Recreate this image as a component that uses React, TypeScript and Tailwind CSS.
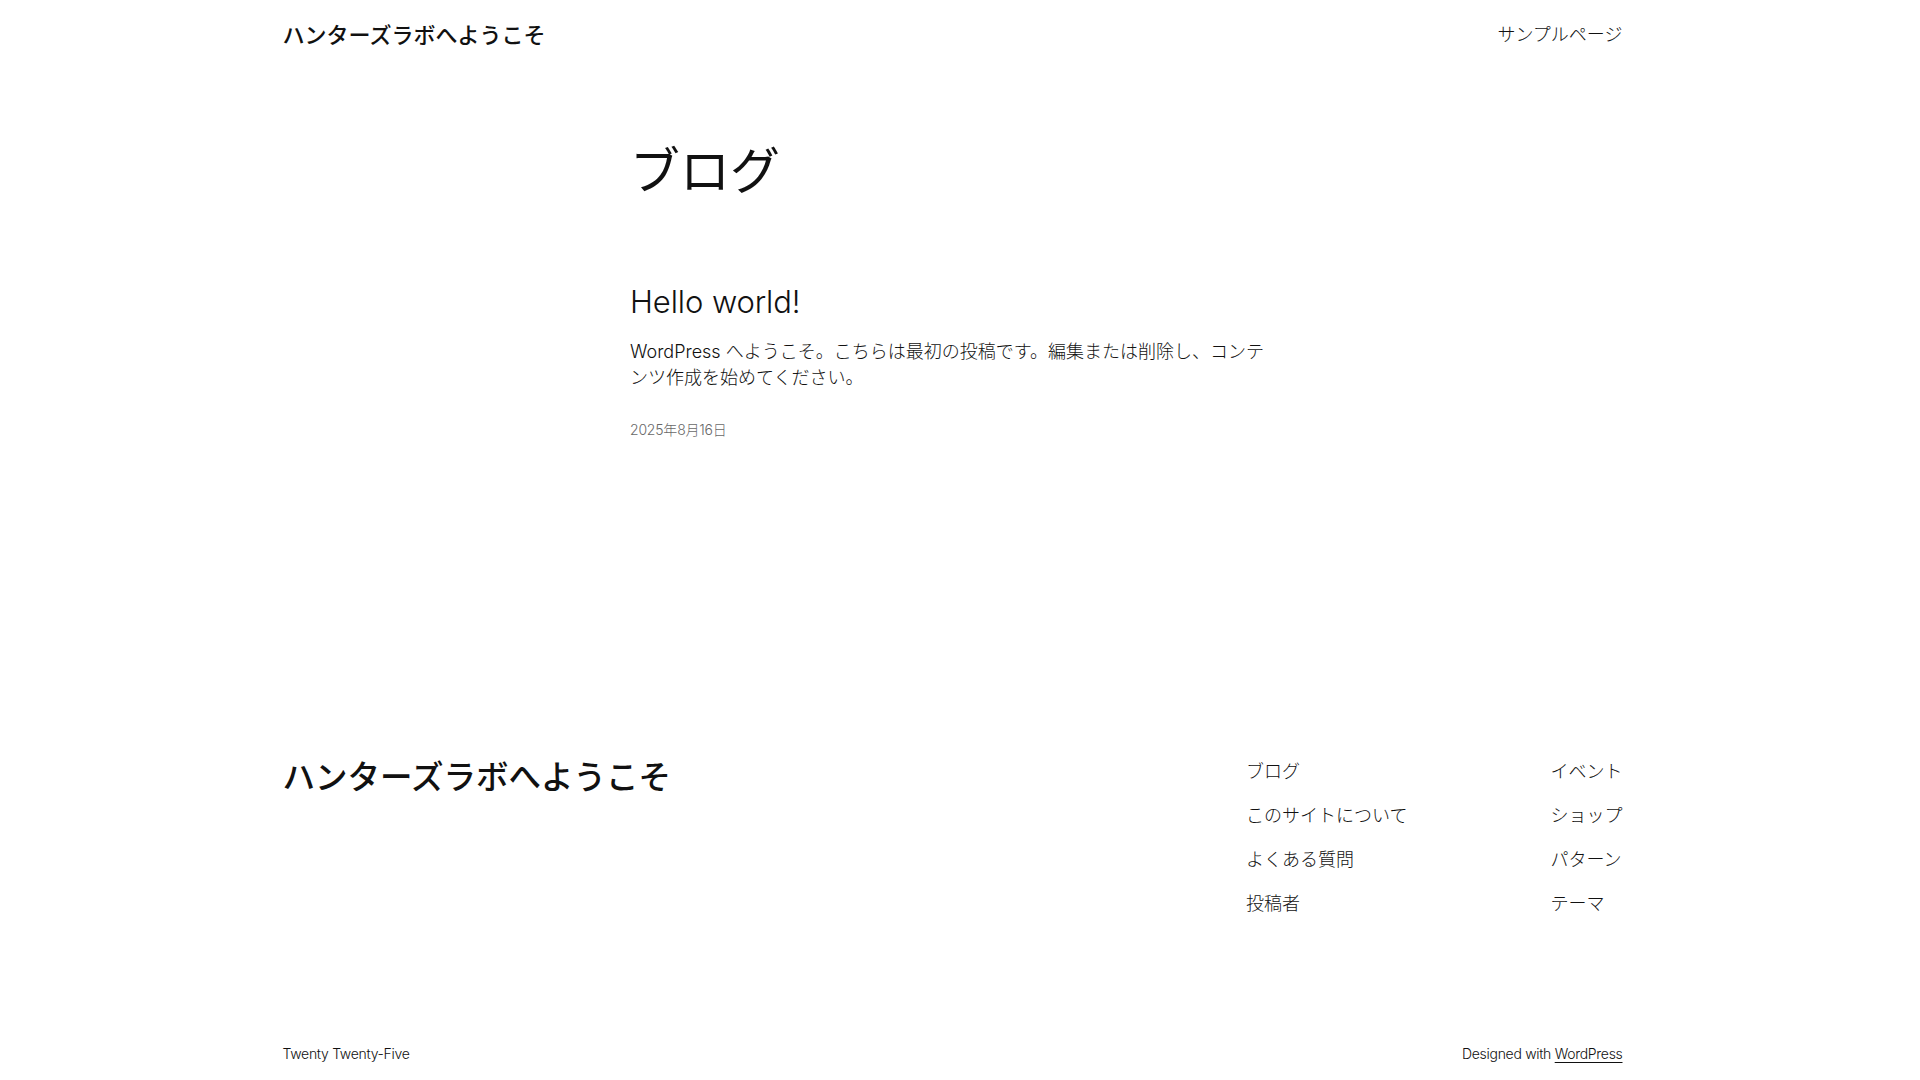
const sans = "font-['Inter','Noto_Sans_CJK_JP',sans-serif]"

const footerNav = [
  ['ブログ', 'このサイトについて', 'よくある質問', '投稿者'],
  ['イベント', 'ショップ', 'パターン', 'テーマ'],
]

export default function App() {
  return (
    // pr-[15px] leaves room where the browser scrollbar sits in the reference
    <div className={`min-h-[1117px] bg-white pr-[15px] text-[#111111] ${sans} font-light`}>
      {/* header */}
      <header className="mx-auto flex h-[70px] max-w-[1340px] items-center justify-between">
        <a href="#" className="text-[22px] font-medium leading-[30px]">
          ハンターズラボへようこそ
        </a>
        <nav>
          <a href="#" className="text-[18px] leading-[26px]">
            サンプルページ
          </a>
        </nav>
      </header>

      <main className="mx-auto w-[645px]">
        <h1 className="mt-[71px] text-[50px] font-normal leading-[60px]">ブログ</h1>
        <article>
          <h2 className="mt-[83px] text-[31px] font-light leading-[36px] tracking-[-0.1px]">
            <a href="#">Hello world!</a>
          </h2>
          <p className="mt-[19px] text-[18px] leading-[26px]">
            WordPress へようこそ。こちらは最初の投稿です。編集または削除し、コンテンツ作成を始めてください。
          </p>
          <div className="mt-[29px] text-[14px] leading-[20px] tracking-[-0.2px] text-[#686868]">
            2025年8月16日
          </div>
        </article>
      </main>

      <footer className="mx-auto mt-[319px] max-w-[1340px] pb-[52px]">
        <div className="flex items-start justify-between">
          <a href="#" className="text-[32.5px] font-medium leading-[38px]">
            ハンターズラボへようこそ
          </a>
          <div className="flex gap-[143px]">
            {footerNav.map((col, i) => (
              <ul key={i} className="flex flex-col gap-[18px]">
                {col.map((item) => (
                  <li key={item} className="text-[18px] leading-[26px]">
                    <a href="#">{item}</a>
                  </li>
                ))}
              </ul>
            ))}
          </div>
        </div>
        <div className="mt-[127px] flex items-center justify-between text-[14px] leading-[20px] tracking-[-0.3px]">
          <p>Twenty Twenty-Five</p>
          <p>
            Designed with{' '}
            <a href="#" className="underline decoration-1 underline-offset-[3px]">
              WordPress
            </a>
          </p>
        </div>
      </footer>
    </div>
  )
}
